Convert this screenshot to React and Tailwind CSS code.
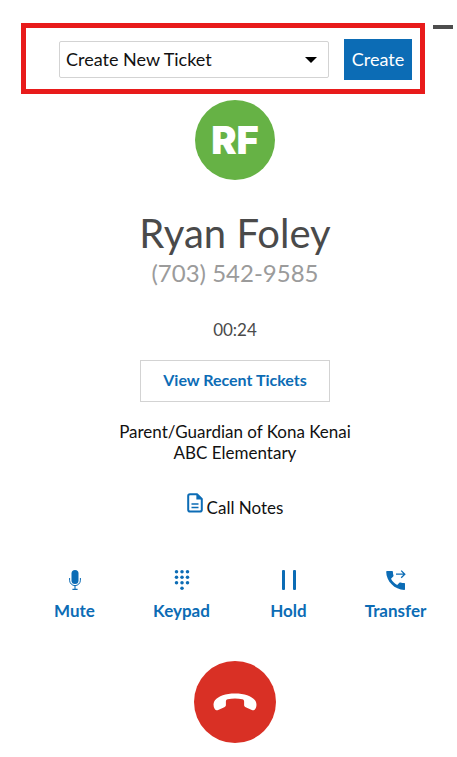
import React, { useState } from 'react';

const MicIcon = () => (
  <svg viewBox="0 0 12 20" className="h-5 w-3" fill="none" stroke="currentColor" aria-hidden="true">
    <rect x="2.5" y="0" width="7" height="14" rx="3.5" fill="currentColor" stroke="none" />
    <path d="M.6 8v2.2a5.4 5.4 0 0 0 10.8 0V8" strokeWidth="1" />
    <path d="M6 15.6v3.6M3.4 19.4h5.2" strokeWidth="1.1" />
  </svg>
);

const KeypadIcon = () => (
  <svg viewBox="0 0 16 20" className="h-5 w-4" fill="currentColor" aria-hidden="true">
    {[1.8, 7.3, 12.8].map((y) =>
      [2.5, 8, 13.5].map((x) => <circle key={`${x}-${y}`} cx={x} cy={y} r="1.75" />)
    )}
    <circle cx="8" cy="18.2" r="1.75" />
  </svg>
);

const HoldIcon = () => (
  <svg viewBox="0 0 14 20" className="h-5 w-[14px]" fill="currentColor" aria-hidden="true">
    <rect x="0" y="0" width="3" height="20" rx="1" />
    <rect x="11" y="0" width="3" height="20" rx="1" />
  </svg>
);

const TransferIcon = () => (
  <svg viewBox="0 0 20 20" className="h-5 w-5" fill="none" aria-hidden="true">
    <path
      fill="currentColor"
      d="M1 1h5.200c.4 0 .7.300.7.700 0 1.300.2 2.600.6 3.800.1.400 0 .8-.3 1.100L5 8.800c1.400 2.700 3.500 4.800 6.200 6.200l2.200-2.200c.3-.3.7-.4 1.100-.3 1.200.4 2.500.6 3.800.6.400 0 .7.300.7.700V19.200c0 .4-.3.700-.7.700C8.800 19.900.2 11.300.2 1.800.2 1.300.5 1 1 1z"
    />
    <path d="M10 4.200h8.800M15.200.6l3.600 3.600-3.600 3.600" stroke="currentColor" strokeWidth="1.300" />
  </svg>
);

const NotesIcon = () => (
  <svg viewBox="0 0 16 20" className="h-5 w-4" fill="none" stroke="currentColor" aria-hidden="true">
    <path d="M10 1.2H3A1.8 1.8 0 0 0 1.2 3v13.8a1.8 1.8 0 0 0 1.8 1.8h10a1.8 1.8 0 0 0 1.800-1.800V6z" strokeWidth="2" strokeLinejoin="round" />
    <path d="M9.400 1v5.600H15z" fill="currentColor" stroke="none" />
    <path d="M4.500 11h7M4.500 14.500h7" strokeWidth="1.700" />
  </svg>
);

const HangUpIcon = () => (
  <svg viewBox="0 0 44 18" className="h-[18px] w-11" fill="currentColor" aria-hidden="true">
    <path d="M22 .4C12.500.4 5.500 3 2 7.200 0 9.800.2 13.600 1.600 15.800c1 1.500 2.300 1.900 3.600 1.200l6.100-2.800c1.100-.5 1.600-1.200 1.600-2.200V8.400c0-1.200.6-1.900 1.800-2.200 4.600-1 10-1 14.600 0 1.200.3 1.800 1 1.800 2.200V12c0 1 .5 1.700 1.600 2.200l6.100 2.800c1.300.7 2.600.3 3.600-1.200 1.400-2.200 1.600-6-.4-8.600C38.500 3 31.500.4 22 .4z" />
  </svg>
);

const actions = [
  { label: 'Mute', Icon: MicIcon },
  { label: 'Keypad', Icon: KeypadIcon },
  { label: 'Hold', Icon: HoldIcon },
  { label: 'Transfer', Icon: TransferIcon },
];

const App = () => {
  const [ticket, setTicket] = useState('new');

  return (
    <div className="min-h-screen bg-white pt-[23px] pb-3 font-['Lato',sans-serif] text-[17px] leading-[21px] text-[#111111]">
      <header className="flex items-start gap-2 pl-[21px] pr-1">
        <div className="flex flex-1 items-center gap-[15px] border-5 border-[#e81b1b] pt-[11px] pr-2 pb-[9px] pl-[33px]">
          <div className="relative flex-1">
            <select
              aria-label="Ticket"
              value={ticket}
              onChange={(e) => setTicket(e.target.value)}
              className="block h-[37px] w-full appearance-none rounded-xs border border-[#d3d3d3] bg-white pr-8 pb-[2px] pl-[6px] text-lg text-[#111111]"
            >
              <option value="new">Create New Ticket</option>
            </select>
            <svg viewBox="0 0 12 6" className="pointer-events-none absolute top-4 right-3 h-[6px] w-3 fill-black" aria-hidden="true">
              <path d="M0 0h12L6 6z" />
            </svg>
          </div>
          <button type="button" className="h-[41px] w-[68px] bg-[#0c6cb5] pb-[2px] text-lg text-white">
            Create
          </button>
        </div>
        <button type="button" aria-label="Minimize" className="mt-[2px] h-1 w-5 bg-[#4d4d4d]" />
      </header>

      <main className="flex flex-col items-center pt-[6px] pr-2 pl-[21px] text-center">
        <div className="flex size-20 items-center justify-center rounded-full bg-[#66b245] font-['Inter',sans-serif] text-[38px] font-black text-white">
          RF
        </div>
        <h1 className="mt-[29px] text-[40px] leading-[48px] text-[#4a4a4a]">Ryan Foley</h1>
        <p className="text-2xl leading-8 text-[#9b9b9b]">(703) 542-9585</p>
        <p className="mt-[30px] text-[#4a4a4a]">00:24</p>
        <button type="button" className="mt-5 h-[42px] w-[190px] border border-[#d3d3d3] pb-[2px] text-base font-bold text-[#0c6cb5]">
          View Recent Tickets
        </button>
        <p className="mt-[19px]">
          Parent/Guardian of Kona Kenai
          <br />
          ABC Elementary
        </p>
        <button type="button" className="mt-[30px] flex items-start gap-1">
          <span className="text-[#0c6cb5]">
            <NotesIcon />
          </span>
          <span className="pt-1">Call Notes</span>
        </button>
        <div className="mt-[52px] grid w-full grid-cols-4 text-[#0c6cb5]">
          {actions.map(({ label, Icon }) => (
            <button key={label} type="button" className="flex flex-col items-center gap-[10px] font-bold">
              <Icon />
              {label}
            </button>
          ))}
        </div>
        <button
          type="button"
          aria-label="Hang up"
          className="mt-10 flex size-[82px] items-center justify-center rounded-full bg-[#d93025] text-white"
        >
          <HangUpIcon />
        </button>
      </main>
    </div>
  );
};

export default App;
